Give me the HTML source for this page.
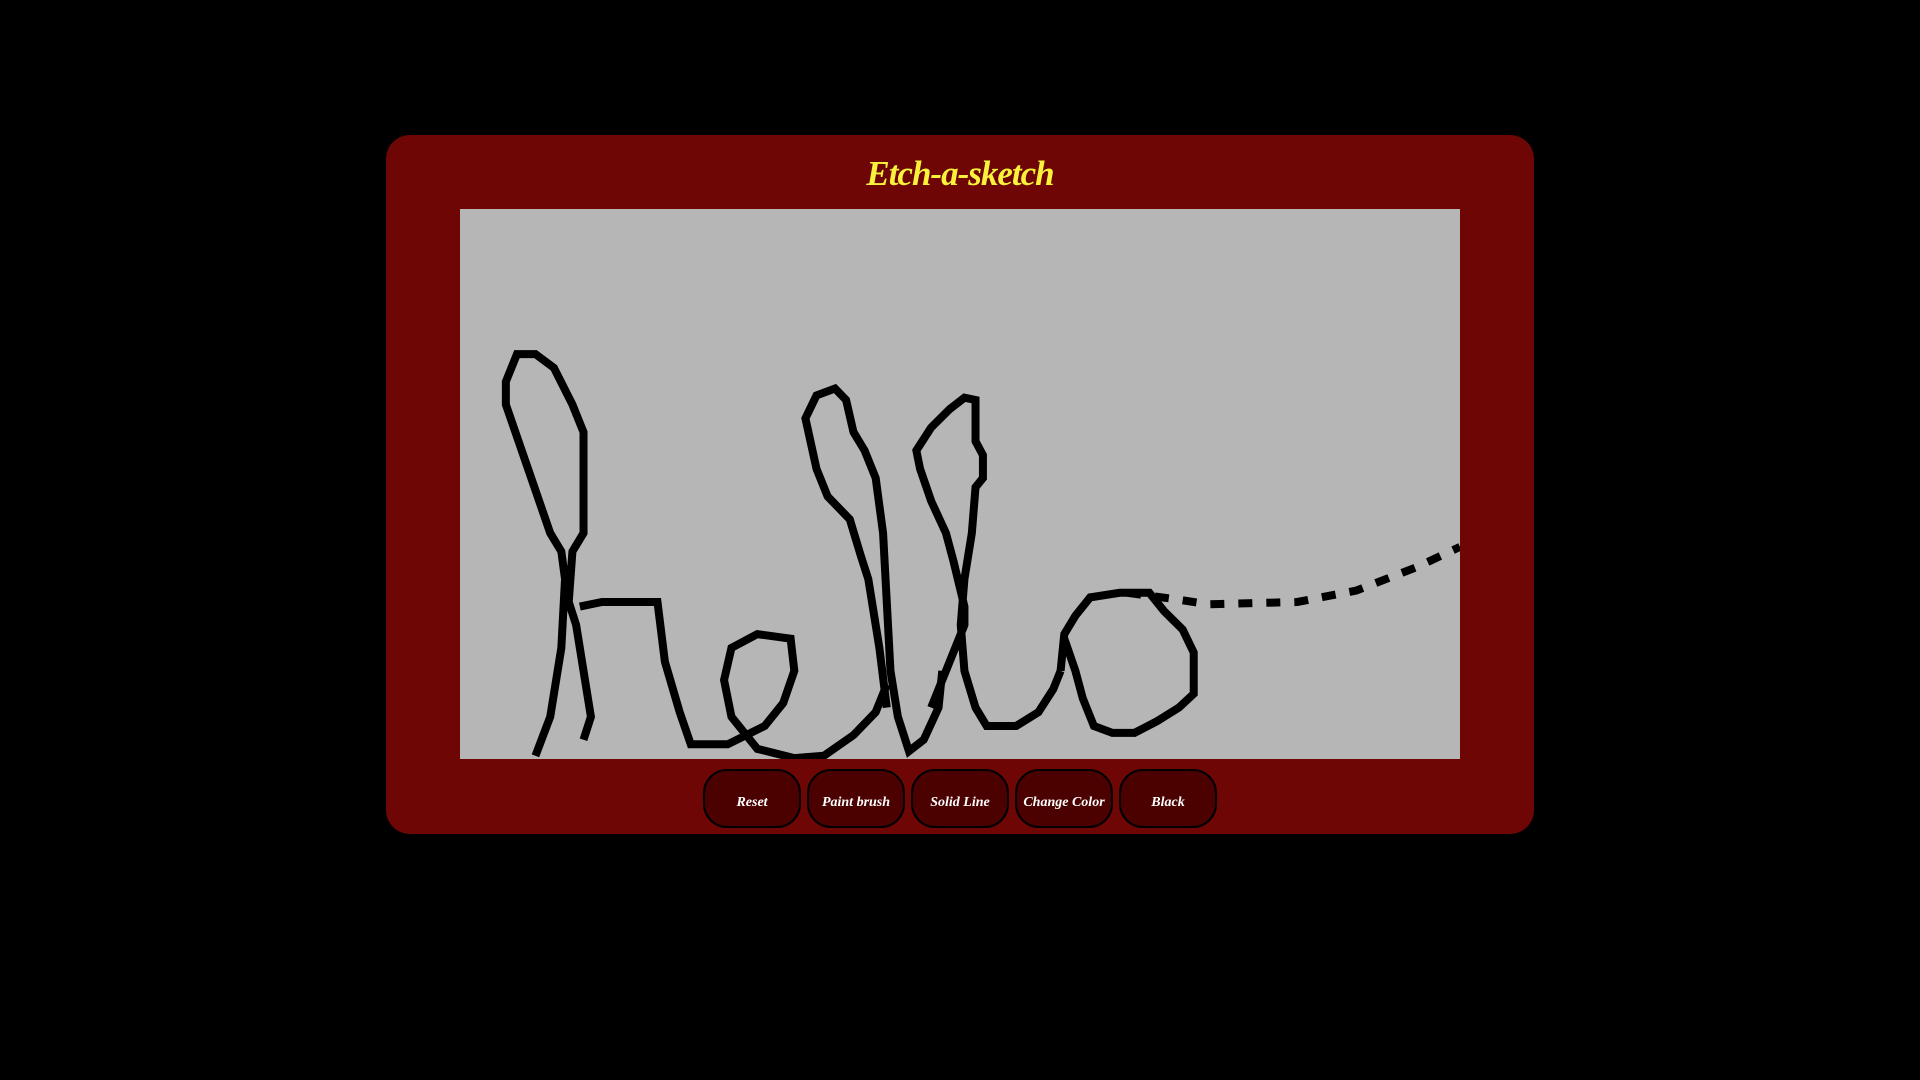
<!DOCTYPE html>
<html><head><meta charset="utf-8"><style>
html,body{margin:0;padding:0;background:#000;width:1920px;height:1080px;overflow:hidden}
.panel{position:absolute;left:386px;top:135px;width:1148px;height:699px;background:#6e0605;border-radius:24px}
h1{position:absolute;left:0;right:0;top:154px;margin:0;text-align:center;font:italic bold 35px "Liberation Serif",serif;color:#f8f23c;letter-spacing:-1px}
.canvas{position:absolute;left:460px;top:209px;width:1000px;height:550px;background:#b6b6b6;overflow:hidden}
.btn{position:absolute;top:769px;width:98px;height:59px;box-sizing:border-box;border:2px solid #000;border-radius:24px;background:#4a0100;color:#fff;font:italic bold 14px "Liberation Serif",serif;display:flex;align-items:center;justify-content:center;padding-top:8px}
</style></head><body>
<div class="panel"></div>
<h1>Etch-a-sketch</h1>
<div class="canvas">
<svg width="1000" height="550" viewBox="108 194 1352 1198" preserveAspectRatio="none" style="display:block">
<g fill="none" stroke="#000" stroke-width="8" stroke-linejoin="miter">
<polyline vector-effect="non-scaling-stroke" points="210,1385 230,1300 245,1150 250,1000 245,940 230,900 200,760 170,620 170,570 185,510 210,510 235,540 260,620 275,680 275,900 260,940 255,1050 265,1100 275,1200 285,1300 275,1350"/>
<polyline vector-effect="non-scaling-stroke" points="270,1060 300,1050 375,1050 385,1180 405,1290 420,1360 470,1360 520,1320 545,1270 560,1200 555,1130 510,1120 475,1150 465,1220 475,1300 510,1370 560,1390 600,1385 640,1340 670,1290 685,1230"/>
<polyline vector-effect="non-scaling-stroke" points="685,1280 675,1150 660,1000 650,950 635,870 605,820 590,760 575,650 590,600 615,585 630,610 640,680 655,720 670,780 680,900 685,1050 690,1200 700,1300 715,1375 735,1350 755,1280 760,1200"/>
<polyline vector-effect="non-scaling-stroke" points="745,1280 790,1100 790,1060 775,960 765,900 745,830 730,760 725,720 745,670 770,630 790,605 805,610 805,700 815,730 815,780 805,800 800,900 790,1000 785,1100 790,1200 805,1280 820,1320 860,1320 890,1290 910,1240 920,1200"/>
<polyline vector-effect="non-scaling-stroke" points="920,1200 925,1120 940,1080 960,1040 1000,1030 1040,1030 1060,1070 1085,1110 1100,1160 1100,1250 1080,1280 1050,1310 1020,1335 990,1335 965,1320 950,1260 940,1200 925,1130"/>
<polyline vector-effect="non-scaling-stroke" stroke-dasharray="14 14" points="1010,1030 1080,1045 1120,1055 1240,1050 1320,1025 1400,975 1460,930"/>
</g></svg>
</div>
<div class="btn" style="left:703px">Reset</div>
<div class="btn" style="left:807px">Paint brush</div>
<div class="btn" style="left:911px">Solid Line</div>
<div class="btn" style="left:1015px">Change Color</div>
<div class="btn" style="left:1119px">Black</div>
</body></html>
